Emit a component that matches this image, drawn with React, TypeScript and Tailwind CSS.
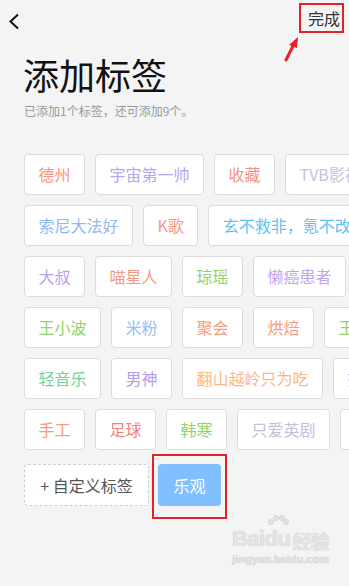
const rows: { label: string; color: string }[][] = [
  [
    { label: '德州', color: '#f7967e' },
    { label: '宇宙第一帅', color: '#b9a6f0' },
    { label: '收藏', color: '#f4937a' },
    { label: 'TVB影视', color: '#c4c4dc' },
  ],
  [
    { label: '索尼大法好', color: '#8fb8f5' },
    { label: 'K歌', color: '#f59a86' },
    { label: '玄不救非，氪不改命', color: '#5cc3f5' },
  ],
  [
    { label: '大叔', color: '#b9a0f0' },
    { label: '喵星人', color: '#f59a80' },
    { label: '琼瑶', color: '#8fd46a' },
    { label: '懒癌患者', color: '#c0a6f0' },
    { label: '旅行', color: '#8fb8f5' },
  ],
  [
    { label: '王小波', color: '#8fd46a' },
    { label: '米粉', color: '#9ac0f5' },
    { label: '聚会', color: '#f59a80' },
    { label: '烘焙', color: '#f59a80' },
    { label: '王菲', color: '#8fd46a' },
  ],
  [
    { label: '轻音乐', color: '#6fd49a' },
    { label: '男神', color: '#b49af0' },
    { label: '翻山越岭只为吃', color: '#f8b98a' },
    { label: '摄影', color: '#8fb8f5' },
  ],
  [
    { label: '手工', color: '#f59a80' },
    { label: '足球', color: '#f58080' },
    { label: '韩寒', color: '#8fd46a' },
    { label: '只爱英剧', color: '#c0c0dc' },
    { label: '电影', color: '#f59a80' },
  ],
];

function Tag({ label, color }: { label: string; color: string }) {
  return (
    <div
      className="shrink-0 h-[41px] px-[13.5px] border border-[#dcdcdc] bg-white rounded-[4px] text-[16px] leading-[39px] whitespace-nowrap"
      style={{ color }}
    >
      {label}
    </div>
  );
}

export default function App() {
  return (
    <div className="relative w-[349px] h-[586px] overflow-hidden bg-[#f4f4f4] font-['Noto_Sans_CJK_SC','Noto_Sans',sans-serif]">
      {/* header */}
      <div className="flex items-start justify-between h-[36px]">
        <svg className="mt-[13px] ml-[8px]" width="12" height="17" viewBox="0 0 12 17" fill="none">
          <path d="M10 1.5 L2.5 8.5 L10 15.5" stroke="#111" strokeWidth="2" />
        </svg>
        <div className="mt-[3px] mr-[5px] w-[45px] h-[30px] border-2 border-[#e5202a] flex items-center justify-end pr-[2px] text-[16px] leading-none text-[#333]">
          完成
        </div>
      </div>

      {/* annotation arrow */}
      <svg className="absolute left-[282px] top-[34px]" width="20" height="30" viewBox="0 0 20 30">
        <path d="M4 26 L12 10" stroke="#e5202a" strokeWidth="3" strokeLinecap="round" />
        <path d="M16 3 L7 11 L15 14 Z" fill="#e5202a" />
      </svg>

      <h1 className="mt-[18px] ml-[23px] text-[36px] leading-[40px] text-[#111] font-normal">添加标签</h1>
      <p className="mt-[9px] ml-[24px] text-[12px] leading-[16px] text-[#9a9a9a]">已添加1个标签，还可添加9个。</p>

      {/* tags */}
      <div className="mt-[35px] pl-[24px] flex flex-col gap-[10px]">
        {rows.map((row, i) => (
          <div key={i} className="flex gap-[10px]">
            {row.map((t) => (
              <Tag key={t.label} label={t.label} color={t.color} />
            ))}
          </div>
        ))}
      </div>

      <div className="mt-[14px] pl-[24px] flex items-start gap-[9px]">
        <div className="h-[42px] w-[125px] border border-dashed border-[#cfcfcf] bg-white rounded-[4px] flex items-center justify-center text-[16px] text-[#555]">
          + 自定义标签
        </div>
        <div className="relative">
          <div className="h-[42px] w-[63px] bg-[#80c0ff] rounded-[4px] flex items-center justify-center text-[16px] text-white">
            乐观
          </div>
          <div className="absolute left-[-6px] top-[-10px] w-[75px] h-[65px] border-2 border-[#e5202a]" />
        </div>
      </div>

      {/* watermark */}
      <div className="absolute left-[232px] top-[528px] flex flex-col items-center text-[#e4e4e4]">
        <div className="flex items-end font-['Liberation_Sans',sans-serif] font-bold text-[22px] leading-none tracking-tight [text-shadow:0_0_1px_#bdbdbd]">
          <span>Bai</span>
          <span className="relative">
            du
            <svg className="absolute left-[2px] top-[-14px]" width="22" height="14" viewBox="0 0 22 14">
              <circle cx="4" cy="8" r="2.5" fill="#e4e4e4" stroke="#c8c8c8" strokeWidth="0.6" />
              <circle cx="9" cy="4" r="2.5" fill="#e4e4e4" stroke="#c8c8c8" strokeWidth="0.6" />
              <circle cx="15" cy="4" r="2.5" fill="#e4e4e4" stroke="#c8c8c8" strokeWidth="0.6" />
              <circle cx="19" cy="8" r="2.5" fill="#e4e4e4" stroke="#c8c8c8" strokeWidth="0.6" />
            </svg>
          </span>
          <span className="text-[19px] ml-[2px] font-['Noto_Sans_CJK_SC',sans-serif]">经验</span>
        </div>
        <div className="mt-[4px] text-[11px] leading-none font-['Liberation_Sans',sans-serif] font-bold text-[#e0e0e0] [text-shadow:0_0_1px_#c2c2c2]">
          jingyan.baidu.com
        </div>
      </div>
    </div>
  );
}
